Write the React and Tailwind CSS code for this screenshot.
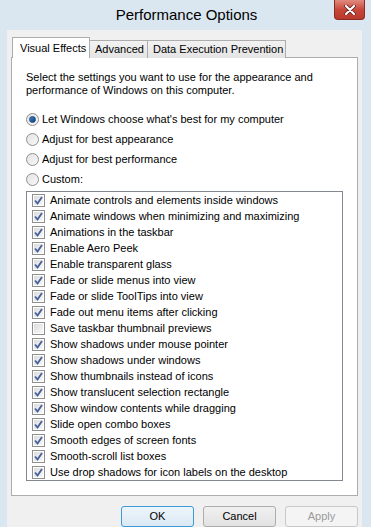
import React from "react";

const effects = [
  ["Animate controls and elements inside windows", true],
  ["Animate windows when minimizing and maximizing", true],
  ["Animations in the taskbar", true],
  ["Enable Aero Peek", true],
  ["Enable transparent glass", true],
  ["Fade or slide menus into view", true],
  ["Fade or slide ToolTips into view", true],
  ["Fade out menu items after clicking", true],
  ["Save taskbar thumbnail previews", false],
  ["Show shadows under mouse pointer", true],
  ["Show shadows under windows", true],
  ["Show thumbnails instead of icons", true],
  ["Show translucent selection rectangle", true],
  ["Show window contents while dragging", true],
  ["Slide open combo boxes", true],
  ["Smooth edges of screen fonts", true],
  ["Smooth-scroll list boxes", true],
  ["Use drop shadows for icon labels on the desktop", true],
];

const radios = [
  ["Let Windows choose what's best for my computer", true],
  ["Adjust for best appearance", false],
  ["Adjust for best performance", false],
  ["Custom:", false],
];

const Radio = ({ on }) => (
  <span className="w-[13px] h-[13px] rounded-full border border-[#8f8f8f] bg-gradient-to-br from-[#e4e4e4] to-[#f7f7f7] flex items-center justify-center shrink-0">
    {on && (
      <span className="w-[7px] h-[7px] rounded-full bg-gradient-to-br from-[#3c86c8] to-[#0f3f78] border border-[#1c4a80]" />
    )}
  </span>
);

const Check = ({ on }) => (
  <span className="w-[13px] h-[13px] border border-[#8f8f8f] bg-white p-[1px] shrink-0 flex">
    <span className="flex-1 bg-gradient-to-br from-[#dcdcdc] to-[#f8f8f8] flex items-center justify-center">
      {on && (
        <svg width="9" height="9" viewBox="0 0 9 9">
          <path d="M1 4.5 L3.5 7.5 L8 1" fill="none" stroke="#44609e" strokeWidth="1.8" />
        </svg>
      )}
    </span>
  </span>
);

const Button = ({ children, primary, disabled }) => (
  <button
    className={`w-[73px] h-[21px] rounded-[3px] border text-[11px] leading-none ${
      primary
        ? "border-[#3c9ad6] bg-gradient-to-b from-[#edf5fb] to-[#dbe9f4] text-black"
        : disabled
        ? "border-[#c8c8c8] bg-[#f4f4f4] text-[#9a9a9a]"
        : "border-[#acacac] bg-gradient-to-b from-[#f0f0f0] to-[#e2e2e2] text-black"
    }`}
  >
    {children}
  </button>
);

export default function App() {
  return (
    <div
      className="w-[371px] h-[527px] bg-[#dbe7f0] flex flex-col overflow-hidden text-black"
      style={{ fontFamily: '"Liberation Sans", Arial, sans-serif' }}
    >
      <div className="h-[30px] relative flex items-center justify-center shrink-0">
        <span className="text-[15px] pl-[2px] pt-[1px]">Performance Options</span>
        <div className="absolute right-[6px] top-0 w-[31px] h-[20px] rounded-b-[4px] border border-t-0 border-[#8c2b22] bg-gradient-to-b from-[#e08a7f] via-[#c8473b] to-[#b8392d] flex items-center justify-center">
          <svg width="12" height="10" viewBox="0 0 12 10">
            <path d="M2 1 L10 9 M10 1 L2 9" stroke="#5a1a14" strokeWidth="3.6" strokeLinecap="round" />
            <path d="M2 1 L10 9 M10 1 L2 9" stroke="#ffffff" strokeWidth="2.2" strokeLinecap="round" />
          </svg>
        </div>
      </div>

      <div className="ml-[7px] mr-[9px] flex-1 bg-[#f0f0f0] px-[4px] pt-[7px] flex flex-col">
        <div className="flex items-end pl-[1px] h-[21px] relative z-10 text-[11px] whitespace-nowrap">
          <div className="h-[21px] px-[7px] bg-white border border-b-0 border-[#adadad] flex items-center w-[78px] -mr-[1px]">
            Visual Effects
          </div>
          <div className="h-[18px] bg-gradient-to-b from-[#f2f2f2] to-[#e4e4e4] border border-b-0 border-[#adadad] flex items-center px-[5px] w-[59px]">
            Advanced
          </div>
          <div className="h-[18px] bg-gradient-to-b from-[#f2f2f2] to-[#e4e4e4] border border-b-0 border-l-0 border-[#adadad] flex items-center px-[5px] w-[138px]">
            Data Execution Prevention
          </div>
        </div>

        <div className="bg-white border border-[#adadad] -mt-[1px] h-[439px] px-[14px] pt-[13px] flex flex-col text-[11px]">
          <p className="leading-[13px]">
            Select the settings you want to use for the appearance and<br />
            performance of Windows on this computer.
          </p>
          <div className="mt-[12px] flex flex-col">
            {radios.map(([label, on]) => (
              <div key={label} className="h-[20px] flex items-center gap-[3px]">
                <Radio on={on} />
                <span>{label}</span>
              </div>
            ))}
          </div>
          <div className="mt-[2px] border border-[#828790] h-[290px] flex flex-col">
            {effects.map(([label, on]) => (
              <div key={label} className="h-[16px] flex items-center gap-[5px] pl-[5px] shrink-0">
                <Check on={on} />
                <span>{label}</span>
              </div>
            ))}
          </div>
        </div>

        <div className="flex justify-end gap-[9px] pt-[10px]">
          <Button primary>OK</Button>
          <Button>Cancel</Button>
          <Button disabled>Apply</Button>
        </div>
      </div>
    </div>
  );
}
